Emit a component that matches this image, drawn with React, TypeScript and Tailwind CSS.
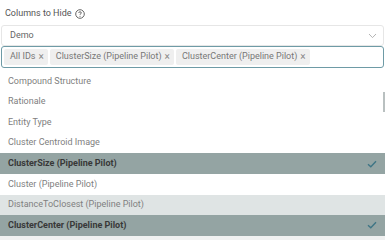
import React from "react";

const items: { label: string; state: "none" | "selected" | "hover" }[] = [
  { label: "Compound Structure", state: "none" },
  { label: "Rationale", state: "none" },
  { label: "Entity Type", state: "none" },
  { label: "Cluster Centroid Image", state: "none" },
  { label: "ClusterSize (Pipeline Pilot)", state: "selected" },
  { label: "Cluster (Pipeline Pilot)", state: "none" },
  { label: "DistanceToClosest (Pipeline Pilot)", state: "hover" },
  { label: "ClusterCenter (Pipeline Pilot)", state: "selected" },
];

const tags = ["All IDs", "ClusterSize (Pipeline Pilot)", "ClusterCenter (Pipeline Pilot)"];

export default function App() {
  return (
    <div
      className="relative w-[385px] h-[240px] overflow-hidden bg-white"
      style={{ fontFamily: "Roboto, 'Liberation Sans', sans-serif" }}
    >
      <div className="flex items-center gap-[3px] h-[25px] pl-[5px] pt-[2px] text-[9px] text-[#555]">
        <span>Columns to Hide</span>
        <svg width="10" height="10" viewBox="0 0 10 10" className="text-[#555]">
          <circle cx="5" cy="5" r="4.3" fill="none" stroke="currentColor" strokeWidth="0.9" />
          <path d="M3.7 3.9 Q3.8 2.8 5 2.8 Q6.3 2.8 6.3 3.9 Q6.3 4.6 5.5 4.9 Q5 5.1 5 5.8" fill="none" stroke="currentColor" strokeWidth="0.9" />
          <circle cx="5" cy="7.2" r="0.55" fill="currentColor" />
        </svg>
      </div>
      <div className="mx-[1px] h-[21px] flex items-center justify-between border border-[#e6e6e6] rounded-[3px] pl-[8px] pr-[6px] text-[9px] text-[#666]">
        <span>Demo</span>
        <svg width="9" height="6" viewBox="0 0 9 6">
          <path d="M1 1 L4.5 4.6 L8 1" fill="none" stroke="#aaa" strokeWidth="0.9" />
        </svg>
      </div>
      <div className="mx-[1px] h-[22px] flex items-center gap-[2px] border-[1.5px] border-[#6e9ba6] rounded-[3px] pl-[2px] text-[9px] text-[#777]">
        {tags.map((t) => (
          <span key={t} className="flex items-center gap-[3px] h-[16px] bg-[#efefef] rounded-[2px] pl-[6px] pr-[4px]">
            <span>{t}</span>
            <span className="text-[#888] text-[10px] leading-none">×</span>
          </span>
        ))}
      </div>
      <div className="mt-[3px] flex flex-col text-[9px]">
        {items.map((it) => (
          <div
            key={it.label}
            className={
              "h-[20.6px] flex items-center justify-between pl-[8px] pr-[8px] " +
              (it.state === "selected"
                ? "bg-[#94a4a3] text-[#383838] font-bold"
                : it.state === "hover"
                ? "bg-[#dfe4e4] text-[#808080]"
                : "bg-white text-[#808080]")
            }
          >
            <span>{it.label}</span>
            {it.state === "selected" && (
              <svg width="10" height="8" viewBox="0 0 10 8">
                <path d="M1 4.2 L3.8 6.8 L9 1.2" fill="none" stroke="#3f7585" strokeWidth="1.4" />
              </svg>
            )}
          </div>
        ))}
        <div className="h-[8px] bg-[#f0f1f1]" />
      </div>
      <div className="absolute right-0 top-[92px] w-[2px] h-[20px] bg-[#b9c0c0]" />
    </div>
  );
}
